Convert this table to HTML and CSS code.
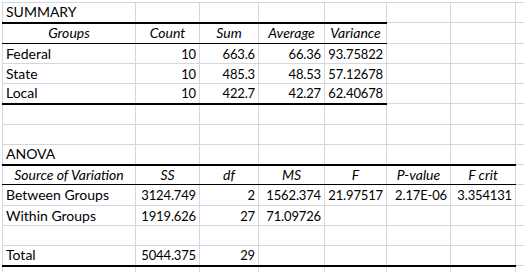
FILE: index.html
```html
<!DOCTYPE html>
<html>
<head>
<meta charset="utf-8">
<link rel="stylesheet" href="styles.css">
</head>
<body>
<div class="sheet">
<table class="grid">
  <colgroup>
    <col class="ca"><col class="cb"><col class="cc"><col class="cd"><col class="ce"><col class="cf"><col class="cg"><col class="ch">
  </colgroup>
  <tbody>
    <tr class="r20"><td class="lbl">SUMMARY</td><td></td><td></td><td></td><td></td><td></td><td></td><td></td></tr>
    <tr class="r21 head">
      <td class="hd top">Groups</td><td class="hd top">Count</td><td class="hd top">Sum</td><td class="hd top">Average</td><td class="hd top">Variance</td><td></td><td></td><td></td>
    </tr>
    <tr class="r20"><td class="lbl">Federal</td><td class="num">10</td><td class="num">663.6</td><td class="num">66.36</td><td class="num">93.75822</td><td></td><td></td><td></td></tr>
    <tr class="r20"><td class="lbl">State</td><td class="num">10</td><td class="num">485.3</td><td class="num">48.53</td><td class="num">57.12678</td><td></td><td></td><td></td></tr>
    <tr class="r20"><td class="lbl bot">Local</td><td class="num bot">10</td><td class="num bot">422.7</td><td class="num bot">42.27</td><td class="num bot">62.40678</td><td></td><td></td><td></td></tr>
    <tr class="r21"><td></td><td></td><td></td><td></td><td></td><td></td><td></td><td></td></tr>
    <tr class="r20"><td></td><td></td><td></td><td></td><td></td><td></td><td></td><td></td></tr>
    <tr class="r20"><td class="lbl">ANOVA</td><td></td><td></td><td></td><td></td><td></td><td></td><td></td></tr>
    <tr class="r20 head">
      <td class="hd top">Source of Variation</td><td class="hd top">SS</td><td class="hd top">df</td><td class="hd top">MS</td><td class="hd top">F</td><td class="hd top">P-value</td><td class="hd top">F crit</td><td></td>
    </tr>
    <tr class="r21"><td class="lbl">Between Groups</td><td class="num">3124.749</td><td class="num">2</td><td class="num">1562.374</td><td class="num">21.97517</td><td class="num">2.17E-06</td><td class="num">3.354131</td><td></td></tr>
    <tr class="r20"><td class="lbl">Within Groups</td><td class="num">1919.626</td><td class="num">27</td><td class="num">71.09726</td><td></td><td></td><td></td><td></td></tr>
    <tr class="r20"><td></td><td></td><td></td><td></td><td></td><td></td><td></td><td></td></tr>
    <tr class="r20"><td class="lbl bot">Total</td><td class="num bot">5044.375</td><td class="num bot">29</td><td class="bot"></td><td class="bot"></td><td class="bot"></td><td class="bot"></td><td></td></tr>
    <tr class="r20"><td></td><td></td><td></td><td></td><td></td><td></td><td></td><td></td></tr>
  </tbody>
</table>
</div>
</body>
</html>
```
FILE: styles.css
```css
html, body {
  margin: 0;
  padding: 0;
  background: #fff;
  overflow: hidden;
}
.sheet {
  width: 524px;
  height: 272px;
  overflow: hidden;
  padding: 2px 0 0 2px;
  box-sizing: border-box;
}
.grid {
  border-collapse: collapse;
  table-layout: fixed;
  width: 593px;
  font-family: Lato, "Open Sans", sans-serif;
  font-size: 14px;
  color: #000;
}
.ca { width: 133px; }
.cb { width: 64px; }
.cc { width: 59px; }
.cd { width: 66px; }
.ce { width: 62px; }
.cf { width: 64px; }
.cg { width: 65px; }
.ch { width: 80px; }
.grid td {
  border: 1px solid #d3d7e0;
  padding: 0 3px;
  white-space: nowrap;
  overflow: hidden;
  vertical-align: middle;
  line-height: 16px;
}
.r20 { height: 20px; }
.r21 { height: 21px; }
.lbl { text-align: left; }
.grid td.num {
  text-align: right;
  font-size: 13px;
  letter-spacing: -0.15px;
  padding-right: 3px;
}
.hd { text-align: center; font-style: italic; }
.grid td.top { border-top: 2px solid #000; border-bottom: 1px solid #000; }
.grid td.bot { border-bottom: 2px solid #000; }
```
